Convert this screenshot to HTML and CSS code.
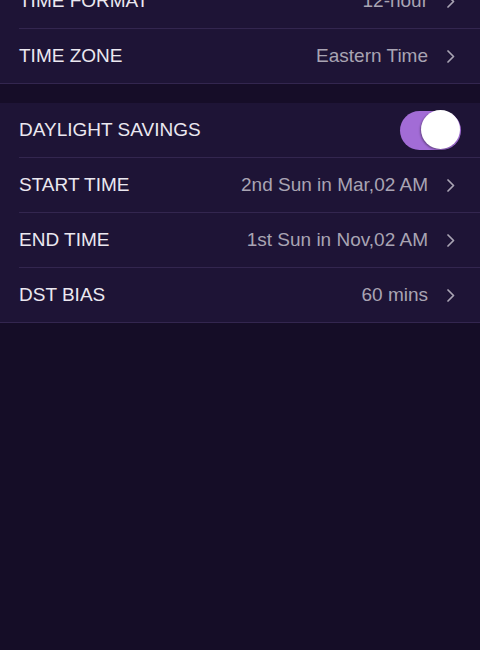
FILE: index.html
```html
<!DOCTYPE html>
<html lang="en">
<head>
  <meta charset="UTF-8">
  <title>Time Settings</title>
  <link rel="stylesheet" href="styles.css">
</head>
<body>
  <ul class="group first">
    <li class="row">
      <span class="label">TIME FORMAT</span>
      <span class="value">12-hour</span>
      <svg class="arrow" viewBox="0 0 8 13"><path d="M1 1 L6.5 6.5 L1 12"/></svg>
    </li>
    <li class="row">
      <span class="label">TIME ZONE</span>
      <span class="value">Eastern Time</span>
      <svg class="arrow" viewBox="0 0 8 13"><path d="M1 1 L6.5 6.5 L1 12"/></svg>
    </li>
  </ul>

  <div class="gap"></div>

  <ul class="group">
    <li class="row">
      <span class="label">DAYLIGHT SAVINGS</span>
      <span class="switch on"><i></i></span>
    </li>
    <li class="row">
      <span class="label">START TIME</span>
      <span class="value">2nd Sun in Mar,02 AM</span>
      <svg class="arrow" viewBox="0 0 8 13"><path d="M1 1 L6.5 6.5 L1 12"/></svg>
    </li>
    <li class="row">
      <span class="label">END TIME</span>
      <span class="value">1st Sun in Nov,02 AM</span>
      <svg class="arrow" viewBox="0 0 8 13"><path d="M1 1 L6.5 6.5 L1 12"/></svg>
    </li>
    <li class="row">
      <span class="label">DST BIAS</span>
      <span class="value">60 mins</span>
      <svg class="arrow" viewBox="0 0 8 13"><path d="M1 1 L6.5 6.5 L1 12"/></svg>
    </li>
  </ul>
</body>
</html>
```

FILE: styles.css
```css
*{
  margin: 0;
  padding: 0;
  box-sizing: border-box;
}
html, body{
  height: 100%;
}
body{
  background: #150d27;
  font-family: "Liberation Sans", Arial, sans-serif;
  overflow: hidden;
}
.group{
  list-style: none;
  background: #1e1436;
}
.first{
  margin-top: -26px;
}
.gap{
  height: 19px;
  background: #160d28;
}
.row{
  position: relative;
  display: flex;
  align-items: center;
  height: 55px;
  padding: 0 25px 1px 19px;
}
.row::after{
  content: "";
  position: absolute;
  left: 19px;
  right: 0;
  bottom: 0;
  height: 1px;
  background: #33264f;
}
.row:last-child::after{
  left: 0;
}
.label{
  flex: 1;
  font-size: 19px;
  color: #ebe8f0;
}
.value{
  font-size: 19px;
  color: #a9a4b3;
}
.arrow{
  width: 8px;
  height: 13px;
  margin-left: 19px;
  fill: none;
  stroke: #a9a4b3;
  stroke-width: 1.7;
  stroke-linecap: round;
  stroke-linejoin: round;
}
.switch{
  position: relative;
  width: 61px;
  height: 39px;
  border-radius: 20px;
  background: #a26cd6;
  margin-right: -6px;
}
.switch i{
  position: absolute;
  top: -1px;
  right: 1px;
  width: 39px;
  height: 39px;
  border-radius: 50%;
  background: #fff;
  box-shadow: -1px 1px 2px rgba(0,0,0,.35);
}
```
